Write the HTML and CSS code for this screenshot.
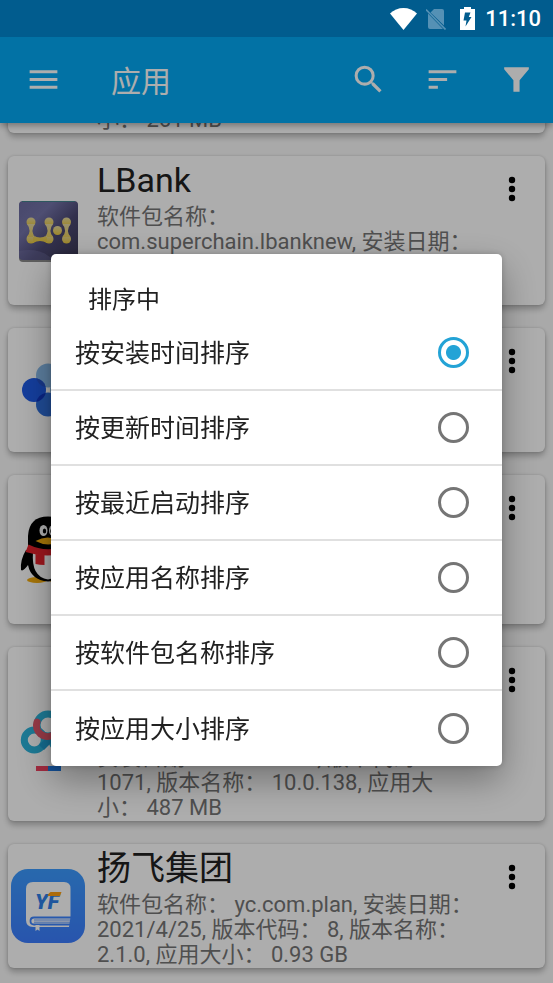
FILE: index.html
```html
<!DOCTYPE html>
<html lang="zh-CN">
  <head>
    <meta charset="UTF-8" />
    <meta name="viewport" content="width=device-width, initial-scale=1.0" />
    <title>应用</title>
    <link rel="stylesheet" href="styles.css">
  </head>
  <body>
    <div class="status-bar">
      <svg width="27" height="22" viewBox="0 0 27 22">
        <path d="M13.500 22L0 5.500C3.500 2 8.500 0 13.500 0S23.500 2 27 5.500z" fill="#fff" />
      </svg>
      <svg class="sim" width="20" height="22" viewBox="0 0 20 22">
        <path d="M8 1h8q2 0 2 2v14.500L4.500 4.500zM2 5.500L17 21H4q-2 0-2-2z" fill="#5591b5" />
        <path d="M0 1.500L19.500 21.500" stroke="#5591b5" stroke-width="1.600" />
      </svg>
      <svg class="battery" width="15" height="23" viewBox="0 0 15 23">
        <path d="M4 0h7v2h4v21H0V2h4z" fill="#fff" />
        <path d="M5 5.500h5.500L8.800 10H11.500L5.500 19.500L6.500 13.500H3.500z" fill="#015c8e" />
      </svg>
      <span class="time">11:10</span>
    </div>

    <header class="toolbar">
      <button class="icon-btn menu-btn" aria-label="菜单">
        <svg class="icon" viewBox="0 0 24 24"><path d="M3 18h18v-2H3v2zm0-5h18v-2H3v2zm0-7v2h18V6H3z" /></svg>
      </button>
      <h1>应用</h1>
      <button class="icon-btn" aria-label="搜索">
        <svg class="icon" viewBox="0 0 24 24"><path d="M15.500 14h-.79l-.28-.27A6.471 6.471 0 0 0 16 9.500 6.500 6.500 0 1 0 9.500 16c1.610 0 3.090-.59 4.230-1.570l.27.28v.79l5 4.990L20.490 19l-4.990-5zm-6 0C7.010 14 5 11.990 5 9.500S7.010 5 9.500 5 14 7.010 14 9.500 11.990 14 9.500 14z" /></svg>
      </button>
      <button class="icon-btn" aria-label="排序">
        <svg class="icon" viewBox="0 0 24 24"><path d="M3 18h6v-2H3v2zM3 6v2h18V6H3zm0 7h12v-2H3v2z" /></svg>
      </button>
      <button class="icon-btn" aria-label="筛选">
        <svg class="icon" viewBox="0 0 24 24"><path d="M4 4h16v1.300L14 12.500V20h-4v-7.500L4 5.300z" /></svg>
      </button>
    </header>

    <main class="app-list">
      <article class="card">
        <div class="app-icon"></div>
        <div class="info">
          <h2>应用</h2>
          <p>版本名称： 1.0.0, 应用大<br>小： 261 MB</p>
        </div>
        <button class="more" aria-label="更多"></button>
      </article>

      <article class="card">
        <svg class="app-icon" viewBox="0 0 74 74">
          <defs>
            <linearGradient id="night" x1="0" y1="0" x2="1" y2="1">
              <stop offset="0" stop-color="#6b6ba0" />
              <stop offset="0.300" stop-color="#7373a8" />
              <stop offset="0.600" stop-color="#4a4772" />
              <stop offset="1" stop-color="#3a3853" />
            </linearGradient>
            <linearGradient id="gold" x1="0" y1="0" x2="0" y2="1">
              <stop offset="0" stop-color="#e3d6a0" />
              <stop offset="1" stop-color="#e9c83c" />
            </linearGradient>
          </defs>
          <rect x="8" y="8" width="59" height="60" rx="4" fill="#8a8a8a" />
          <rect x="8" y="7" width="59" height="59" rx="4" fill="url(#night)" />
          <path d="M11 7.500h53" stroke="#43828c" />
          <path d="M8 57q22-4 34 9H12q-4 0-4-4z" fill="#7d7db4" opacity="0.300" />
          <g fill="url(#gold)">
            <circle cx="20" cy="28" r="4.500" />
            <circle cx="20" cy="45" r="4.500" />
            <circle cx="38" cy="28" r="4.500" />
            <circle cx="38" cy="45" r="4.500" />
            <circle cx="46.500" cy="36.500" r="4.500" />
            <circle cx="55.500" cy="28" r="4.500" />
            <circle cx="55.500" cy="45" r="4.500" />
            <path d="M16 30q5 6.500 0 13h8q-5-6.500 0-13zM34 30q5 6.500 0 13h8q-5-6.500 0-13zM51.500 30q5 6.500 0 13h8q-5-6.500 0-13zM22 41q7 5 14 0v8q-7-4-14 0z" />
          </g>
        </svg>
        <div class="info">
          <h2>LBank</h2>
          <p>软件包名称： com.superchain.lbanknew, 安装日期： 2021/4/25, 版本代码： 100, 版本名称： 1.0.000, 应用大小： 100 MB</p>
        </div>
        <button class="more" aria-label="更多">
          <svg width="8" height="26" viewBox="0 0 8 26"><circle cx="4" cy="4" r="3.200" /><circle cx="4" cy="13" r="3.200" /><circle cx="4" cy="22" r="3.200" /></svg>
        </button>
      </article>

      <article class="card">
        <svg class="app-icon" viewBox="0 0 74 74">
          <circle cx="37" cy="22.500" r="12" fill="#87b9e9" />
          <circle cx="51" cy="37" r="12" fill="#87b9e9" />
          <circle cx="37" cy="51.500" r="12" fill="#2e6fdc" />
          <circle cx="23" cy="37" r="12" fill="#1e5be6" />
          <clipPath id="left-dot"><circle cx="23" cy="37" r="12" /></clipPath>
          <g clip-path="url(#left-dot)" fill="#1035c0">
            <circle cx="37" cy="22.500" r="12" fill="#2350c8" />
            <circle cx="37" cy="51.500" r="12" />
          </g>
        </svg>
        <div class="info">
          <h2>应用</h2>
          <p>软件包名称： com.app, 安装日期： 2021/4/25, 版本代码： 8, 版本名称： 1.0.0, 应用大小： 100 MB</p>
        </div>
        <button class="more" aria-label="更多">
          <svg width="8" height="26" viewBox="0 0 8 26"><circle cx="4" cy="4" r="3.200" /><circle cx="4" cy="13" r="3.200" /><circle cx="4" cy="22" r="3.200" /></svg>
        </button>
      </article>

      <article class="card">
        <svg class="app-icon" viewBox="0 0 74 74">
          <ellipse cx="26" cy="67" rx="10" ry="3" fill="#f5ac0c" />
          <ellipse cx="48" cy="67" rx="10" ry="3" fill="#f5ac0c" />
          <path d="M15 37Q9 47 10 57q2 2 7-5Q20 67 37 68.500 54 67 57 52q5 7 7 5 1-10-5-20z" fill="#000" />
          <path d="M22 39Q20 64 37 66.500 54 64 52 39z" fill="#fff" />
          <path d="M17 33V23Q18 3.500 37 3.500T57 23v10q-20 12-40 0z" fill="#000" />
          <ellipse cx="32.500" cy="17.500" rx="4" ry="5.500" fill="#fff" />
          <ellipse cx="42" cy="17.500" rx="4" ry="5.500" fill="#fff" />
          <ellipse cx="33.500" cy="18" rx="1.700" ry="2.500" fill="#000" />
          <ellipse cx="41" cy="18" rx="1.700" ry="2.500" fill="#000" />
          <path d="M24.500 28q12-7 25 0-12 7-25 0z" fill="#f5ac0c" />
          <path d="M17.500 31.500Q37 41 57 31.500l2 7Q37 46 14.500 39z" fill="#e7212b" />
          <path d="M24.500 41l9 1v10q-5 0-9-1z" fill="#e7212b" />
        </svg>
        <div class="info">
          <h2>QQ</h2>
          <p>软件包名称： com.tencent.mobileqq, 安装日期： 2021/4/25, 版本代码： 100, 版本名称： 1.0.000, 应用大小： 100 MB</p>
        </div>
        <button class="more" aria-label="更多">
          <svg width="8" height="26" viewBox="0 0 8 26"><circle cx="4" cy="4" r="3.200" /><circle cx="4" cy="13" r="3.200" /><circle cx="4" cy="22" r="3.200" /></svg>
        </button>
      </article>

      <article class="card">
        <svg class="app-icon" viewBox="0 0 74 74">
          <g fill="none" stroke-width="7" stroke="#2bb4dc">
            <circle cx="51" cy="43" r="10" />
            <circle cx="37" cy="28" r="11" />
            <circle cx="23.300" cy="43" r="10" />
            <path d="M30.500 50.500l12-12" stroke="#1e9fd4" />
            <path d="M26 25A11 11 0 0 0 42 38" stroke="#e0566a" stroke-linecap="round" />
          </g>
          <rect x="25" y="69" width="12" height="5" fill="#f0405f" />
          <rect x="37" y="69" width="13" height="5" fill="#1e78e0" />
        </svg>
        <div class="info">
          <h2>百度网盘</h2>
          <p>软件包名称：<br>com.baidu.netdisk,<br>安装日期： 2021/4/25, 版本代码： 1071, 版本名称： 10.0.138, 应用大<br>小： 487 MB</p>
        </div>
        <button class="more" aria-label="更多">
          <svg width="8" height="26" viewBox="0 0 8 26"><circle cx="4" cy="4" r="3.200" /><circle cx="4" cy="13" r="3.200" /><circle cx="4" cy="22" r="3.200" /></svg>
        </button>
      </article>

      <article class="card">
        <svg class="app-icon" viewBox="0 0 74 74">
          <defs>
            <linearGradient id="sky" x1="0" y1="0" x2="0" y2="1">
              <stop offset="0" stop-color="#3b9bff" />
              <stop offset="1" stop-color="#3b7dff" />
            </linearGradient>
          </defs>
          <rect width="74" height="74" rx="17" fill="url(#sky)" />
          <path d="M22 13h31q6.500 0 6.500 6.500V48L58 58H22q-7 0-7-7V20q0-7 7-7z" fill="#fff" />
          <path d="M60 48.500H23q-3.500 0-3.500 3.500t3.500 3.500h36" fill="none" stroke="#3b84ff" stroke-width="1.800" />
          <path d="M23 51h36.500M23 53.200h36" stroke="#3b84ff" stroke-width="0.800" />
          <path d="M24.500 56h4v6l-2-1.500-2 1.500z" fill="#fff" />
          <text class="mark" x="24" y="39.500">YF</text>
          <path d="M39.500 23h11l-1.500 4H36.500q1-3 3-4z" fill="#ffa012" />
        </svg>
        <div class="info">
          <h2>扬飞集团</h2>
          <p>软件包名称： yc.com.plan, 安装日期： 2021/4/25, 版本代码： 8, 版本名称： 2.1.0, 应用大小： 0.93 GB</p>
        </div>
        <button class="more" aria-label="更多">
          <svg width="8" height="26" viewBox="0 0 8 26"><circle cx="4" cy="4" r="3.200" /><circle cx="4" cy="13" r="3.200" /><circle cx="4" cy="22" r="3.200" /></svg>
        </button>
      </article>
    </main>

    <div class="overlay">
      <form class="dialog" role="dialog" aria-labelledby="sort-title">
        <h2 id="sort-title">排序中</h2>
        <label class="option"><span>按安装时间排序</span><input type="radio" name="sort" value="install" checked></label>
        <label class="option"><span>按更新时间排序</span><input type="radio" name="sort" value="update"></label>
        <label class="option"><span>按最近启动排序</span><input type="radio" name="sort" value="launch"></label>
        <label class="option"><span>按应用名称排序</span><input type="radio" name="sort" value="name"></label>
        <label class="option"><span>按软件包名称排序</span><input type="radio" name="sort" value="package"></label>
        <label class="option"><span>按应用大小排序</span><input type="radio" name="sort" value="size"></label>
      </form>
    </div>
  </body>
</html>
```
FILE: styles.css
```css
* {
  box-sizing: border-box;
}
body {
  margin: 0;
  height: 100vh;
  display: flex;
  flex-direction: column;
  overflow: hidden;
  font-family: Roboto, "Noto Sans CJK SC", sans-serif;
  color: #212121;
  background: #fafafa;
}
h1,
h2,
p {
  margin: 0;
  font-weight: 400;
}
button {
  padding: 0;
  border: none;
  background: none;
  cursor: pointer;
}

/* status bar stays above the overlay */
.status-bar {
  position: relative;
  z-index: 3;
  flex: none;
  height: 37px;
  padding: 0 12px;
  display: flex;
  align-items: center;
  justify-content: flex-end;
  background: #015c8e;
  color: #fff;
}
.sim {
  margin-left: 9px;
}
.battery {
  margin-left: 14px;
}
.time {
  margin-left: 10px;
  font-size: 22px;
  font-weight: 500;
}

.toolbar {
  position: relative;
  z-index: 1;
  flex: none;
  height: 86px;
  padding-bottom: 2px;
  display: flex;
  align-items: center;
  background: #03a9f4;
  color: #fff;
  box-shadow: 0 3px 6px rgba(0, 0, 0, 0.3);
}
.toolbar h1 {
  flex: 1;
  margin-left: 25px;
  font-size: 30px;
}
.icon-btn {
  width: 74px;
  height: 74px;
  display: flex;
  align-items: center;
  justify-content: center;
  color: #fff;
}
.menu-btn {
  width: 86px;
}
.icon {
  width: 37px;
  height: 37px;
  fill: currentColor;
}

/* list is scrolled to the end */
.app-list {
  flex: 1;
  min-height: 0;
  padding: 0 8px 15px;
  display: flex;
  flex-direction: column;
  justify-content: flex-end;
  gap: 23px;
  overflow: hidden;
}
.card {
  flex: none;
  display: flex;
  align-items: center;
  padding-left: 3px;
  border-radius: 6px;
  background: #fff;
  box-shadow: 0 4px 6px rgba(0, 0, 0, 0.26), 0 0 3px rgba(0, 0, 0, 0.16);
}
.app-icon {
  flex: none;
  width: 74px;
  height: 74px;
  margin-right: 12px;
}
.info {
  flex: 1;
  min-width: 0;
  padding-bottom: 1px;
}
.info h2 {
  font-size: 34px;
  line-height: 48px;
}
.info p {
  font-size: 22px;
  line-height: 25px;
  color: #757575;
}
.more {
  align-self: flex-start;
  width: 67px;
  height: 66px;
  display: flex;
  align-items: center;
  justify-content: center;
}
.mark {
  font-size: 21px;
  font-weight: 900;
  font-style: italic;
  fill: #2f7fe8;
}

.overlay {
  position: fixed;
  inset: 0;
  z-index: 2;
  padding: 37px 51px 0;
  display: flex;
  align-items: center;
  background: rgba(0, 0, 0, 0.32);
}
.dialog {
  flex: 1;
  border-radius: 5px;
  background: #fff;
  box-shadow: 0 14px 36px rgba(0, 0, 0, 0.34), 0 0 6px rgba(0, 0, 0, 0.2);
}
.dialog h2 {
  padding: 30px 37px 0;
  font-size: 24px;
  line-height: 32px;
}
.option {
  height: 75px;
  padding: 0 33px 0 24px;
  display: flex;
  align-items: center;
  justify-content: space-between;
  font-size: 25px;
  border-bottom: 2px solid #e0e0e0;
  cursor: pointer;
}
.option:last-child {
  border-bottom: none;
}
.option span {
  padding-bottom: 3px;
}
.option input {
  appearance: none;
  width: 31px;
  height: 31px;
  margin: 0;
  border: 3px solid #757575;
  border-radius: 50%;
}
.option input:checked {
  border-color: #23a3d6;
  background: radial-gradient(circle, #23a3d6 7px, transparent 8px);
}
```
